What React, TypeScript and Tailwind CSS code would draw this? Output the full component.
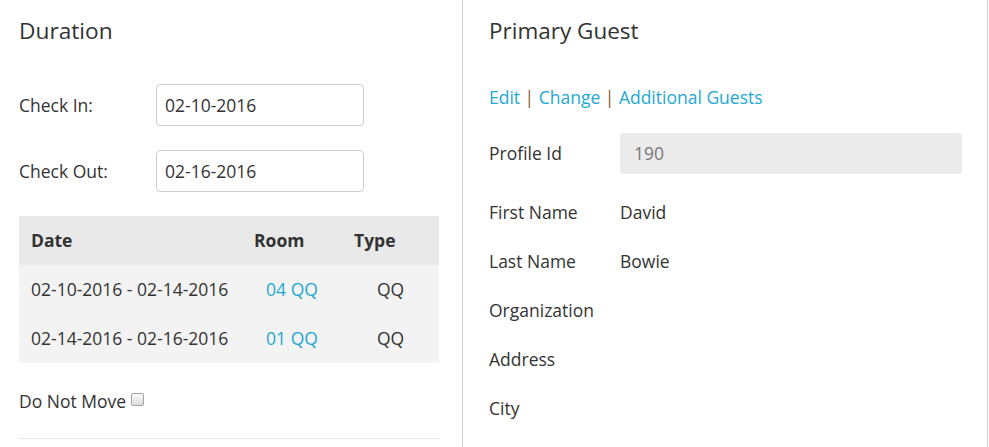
const font = { fontFamily: '"Open Sans", "Noto Sans", Arial, sans-serif' };

const stays = [
  { date: "02-10-2016 - 02-14-2016", room: "04 QQ", type: "QQ" },
  { date: "02-14-2016 - 02-16-2016", room: "01 QQ", type: "QQ" },
];

const guestRows = [
  { label: "First Name", value: "David" },
  { label: "Last Name", value: "Bowie" },
  { label: "Organization", value: "" },
  { label: "Address", value: "" },
  { label: "City", value: "" },
];

function DateField({ label, value }: { label: string; value: string }) {
  return (
    <div className="flex h-[42px] items-center">
      <span className="w-[137px]">{label}</span>
      <div className="flex h-[42px] w-[208px] items-center rounded-[4px] border border-[#cccccc] bg-white pl-[8px]">
        {value}
      </div>
    </div>
  );
}

export default function App() {
  return (
    <div style={font} className="flex h-[447px] w-[989px] overflow-hidden bg-white text-[17.5px] text-[#333333]">
      {/* left: duration */}
      <div className="w-[462px] shrink-0 pl-[19px] pr-[23px]">
        <h2 className="flex h-[62px] items-center text-[22.7px] font-normal">Duration</h2>
        <div className="mt-[22px]">
          <DateField label="Check In:" value="02-10-2016" />
        </div>
        <div className="mt-[24px]">
          <DateField label="Check Out:" value="02-16-2016" />
        </div>

        <table className="mt-[24px] w-[420px] border-collapse">
          <thead>
            <tr className="h-[49px] bg-[#e9e9e9] text-left">
              <th className="w-[223px] pl-[12px] font-bold">Date</th>
              <th className="w-[100px] pl-[12px] font-bold">Room</th>
              <th className="pl-[12px] font-bold">Type</th>
            </tr>
          </thead>
          <tbody className="bg-[#f3f3f3]">
            {stays.map((s) => (
              <tr key={s.date} className="h-[49px]">
                <td className="pl-[12px]">{s.date}</td>
                <td className="text-center text-[#23a8d2]">{s.room}</td>
                <td className="text-center">{s.type}</td>
              </tr>
            ))}
          </tbody>
        </table>

        <div className="mt-[24px] flex h-[28px] items-center">
          <span>Do Not Move</span>
          <span className="ml-[5px] mb-[3px] inline-block h-[13px] w-[13px] rounded-[2px] border border-[#a5a5a5] bg-gradient-to-b from-[#fafafa] to-[#dedede]" />
        </div>
        <div className="mt-[23px] border-t border-[#e6e6e6]" />
      </div>

      {/* right: primary guest */}
      <div className="w-[526px] shrink-0 border-x border-[#cfcfcf] pl-[26px] pr-[25px]">
        <h2 className="flex h-[62px] items-center text-[22.5px] font-normal">Primary Guest</h2>
        <div className="mt-[22px] flex h-[26px] items-center gap-[4.5px] text-[#23a8d2]">
          <span>Edit</span>
          <span className="text-[#8a5a30]">|</span>
          <span>Change</span>
          <span className="text-[#8a5a30]">|</span>
          <span>Additional Guests</span>
        </div>
        <div className="mt-[23px] flex h-[41px] items-center">
          <span className="w-[131px]">Profile Id</span>
          <div className="flex h-[41px] flex-1 items-center rounded-[3px] bg-[#ebebeb] pl-[14px] text-[#777777]">
            190
          </div>
        </div>
        <div className="mt-[14px]">
          {guestRows.map((r) => (
            <div key={r.label} className="flex h-[49px] items-center">
              <span className="w-[131px]">{r.label}</span>
              <span>{r.value}</span>
            </div>
          ))}
        </div>
      </div>
    </div>
  );
}
